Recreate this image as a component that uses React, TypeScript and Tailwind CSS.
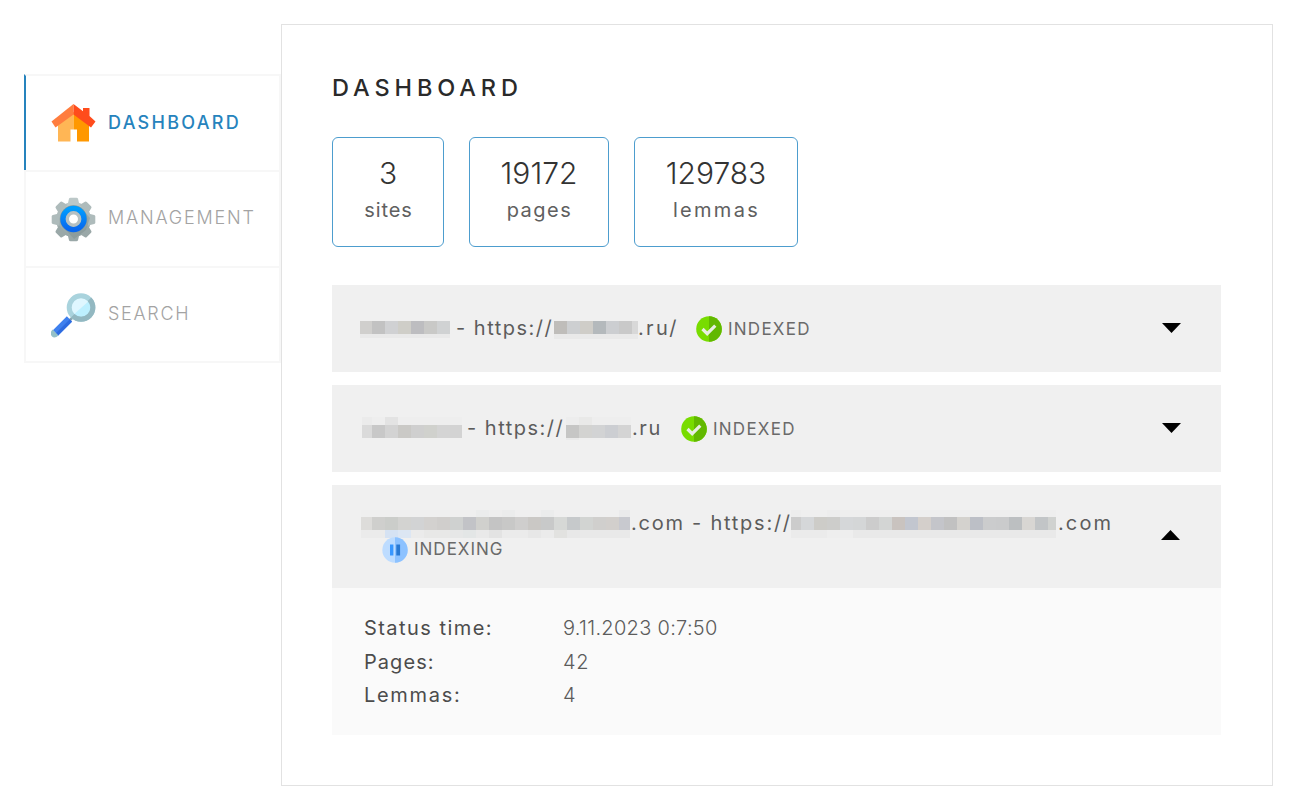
import React from "react";

type Strip = { w: number[]; c: string[]; top?: string[]; bottom?: string[]; topH?: number; bottomH?: number };

function Mosaic({ w, c, top, bottom, topH = 8, bottomH = 5 }: Strip) {
  const total = w.reduce((a, b) => a + b, 0);
  let x = 0;
  return (
    <svg width={total} height={29} viewBox={`0 0 ${total} 29`} shapeRendering="crispEdges" className="block shrink-0">
      {w.map((cw, i) => {
        const left = x;
        x += cw;
        return (
          <g key={i}>
            {top && <rect x={left} y={8 - topH} width={cw} height={topH} fill={top[i] ?? "#eeeeee"} />}
            <rect x={left} y={8} width={cw} height={13} fill={c[i]} />
            {bottom && <rect x={left} y={21} width={cw} height={bottomH} fill={bottom[i] ?? "#e9e9e9"} />}
          </g>
        );
      })}
    </svg>
  );
}

const fill = (n: number) => Array.from({ length: n }, () => 13);

const HouseIcon = () => (
  <svg width="45" height="38" viewBox="0 0 45 38">
    <path d="M7 19 22.5 8V37.5H7z" fill="#ffb655" />
    <path d="M22.5 8 38 19V37.5H22.5z" fill="#ff9800" />
    <path d="M19.5 25.5h6.5V38h-6.5z" fill="#fff" />
    <path d="M22.5 0v10.5L4.5 23.5.5 17.5z" fill="#ff7d3e" />
    <path d="M22.5 0 32 7.2V4h6.5v8l6 5.5-4.5 6L22.5 10.5z" fill="#ff4c1c" />
  </svg>
);

const GearIcon = () => (
  <svg width="45" height="45" viewBox="0 0 45 45">
    <defs>
      <linearGradient id="gearBody" x1="0" y1="0" x2="0" y2="1">
        <stop offset="0" stopColor="#bdc9c9" />
        <stop offset="1" stopColor="#96a5a5" />
      </linearGradient>
      <linearGradient id="gearRing" x1="0" y1="0" x2="0" y2="1">
        <stop offset="0" stopColor="#009dff" />
        <stop offset="1" stopColor="#0867ee" />
      </linearGradient>
    </defs>
    <circle cx="22.5" cy="22.5" r="17.5" fill="url(#gearBody)" />
    {[0, 45, 90, 135, 180, 225, 270, 315].map((a) => (
      <path
        key={a}
        d="M16.5 8 18 1.8Q18.3.7 19.5.7h6q1.2 0 1.5 1.1L28.5 8z"
        fill={a > 90 && a < 270 ? "#9aa8a8" : a === 0 ? "#bcc8c8" : "#aebbbb"}
        transform={`rotate(${a} 22.5 22.5)`}
      />
    ))}
    <path d="M31 12 39 21 35 33 23 42 14 32z" fill="#708080" opacity=".3" />
    <circle cx="22.5" cy="22" r="13.7" fill="#879b9c" />
    <circle cx="22.5" cy="22" r="10.3" fill="none" stroke="url(#gearRing)" strokeWidth="5.8" />
    <circle cx="22.5" cy="22" r="6.2" fill="#fff" stroke="#b5c0c2" strokeWidth="3.4" />
  </svg>
);

const SearchIcon = () => (
  <svg width="45" height="45" viewBox="0 0 45 45">
    <path d="M18 28 22 24" stroke="#8ca7b0" strokeWidth="2.5" />
    <path d="M4.5 40 18.5 26" stroke="#3f80ee" strokeWidth="7.5" />
    <path d="M7 42.5 21 28.5 18.8 26.3 4.8 40.3z" fill="#2862d9" opacity=".7" />
    <path d="M1.500 36.500 7.500 42.500Q3.500 46 .8 43.200T1.500 36.500z" fill="#94c0c8" />
    <circle cx="30" cy="14.5" r="12" fill="#dff7ff" />
    <path d="M20.5 23.5 39.5 6.5A12 12 0 0 1 20.5 23.5z" fill="#bdf0ff" />
    <circle cx="30" cy="14.5" r="11.8" fill="none" stroke="#a9d3dd" strokeWidth="5" />
    <path d="M38.5 6.2A11.8 11.8 0 0 1 21.7 22.8" fill="none" stroke="#93b8c1" strokeWidth="5" />
  </svg>
);

const CheckIcon = () => (
  <svg width="26" height="26" viewBox="0 0 26 26" className="block shrink-0">
    <circle cx="13" cy="13" r="12.8" fill="#78dc00" />
    <path d="M13 .2a12.8 12.8 0 0 1 0 25.6z" fill="#62b800" />
    <path d="m6.5 13 4.7 4.7L19.3 9.7" fill="none" stroke="#e8eee2" strokeWidth="3.2" />
  </svg>
);

const PauseIcon = () => (
  <svg width="26" height="26" viewBox="0 0 26 26" className="block shrink-0">
    <circle cx="13" cy="13" r="12.7" fill="#bddcff" />
    <path d="M13 .3a12.7 12.7 0 0 1 0 25.4z" fill="#8dc2ff" />
    <path d="M8 7.5h3.4v11H8z" fill="#3897ff" />
    <path d="M14.3 7.5h3.8v11h-3.8z" fill="#2878d2" />
  </svg>
);

const Arrow = ({ up = false }: { up?: boolean }) => (
  <svg width="19" height="10" viewBox="0 0 19 10" className="block shrink-0">
    <path d={up ? "M0 10 9.5 0 19 10z" : "M0 0h19L9.5 10z"} fill="#000" />
  </svg>
);

function NavItem({ active, icon, children }: { active?: boolean; icon: React.ReactNode; children: React.ReactNode }) {
  return (
    <div
      className={
        active
          ? "flex h-24 items-center border-t-2 border-r-2 border-l-2 border-t-[#f7f7f7] border-r-[#f7f7f7] border-l-[#2683bd] pl-[25px] text-[#2683bd]"
          : "flex h-24 items-center border-t-2 border-r-2 border-l-2 border-[#f7f7f7] pl-[25px] text-[#a3a3a3]"
      }
    >
      <div className="mr-3 flex w-[45px] justify-center">{icon}</div>
      <div className={active ? "pb-px" : "pb-[3px]"}>{children}</div>
    </div>
  );
}

function Stat({ className, value, label }: { className: string; value: React.ReactNode; label: React.ReactNode }) {
  return (
    <div className={`flex h-[110px] flex-col items-center rounded-[6px] border border-[#4d9dce] pt-[17px] ${className}`}>
      <div className="text-[30px] leading-9 font-light text-[#333]">{value}</div>
      <div className="mt-px pl-px text-[20px] leading-9 text-[#606060]">{label}</div>
    </div>
  );
}

const Indexed = () => (
  <>
    <CheckIcon />
    <span className="ml-1.5 text-[17px] leading-6 font-normal tracking-[1.25px] text-[#6a6a6a]">INDEXED</span>
  </>
);

export default function App() {
  return (
    <div className="flex h-[811px] w-[1293px] overflow-hidden bg-white pt-6 pl-6 font-['Inter',sans-serif] whitespace-nowrap">
      <nav className="mt-[50px] h-[289px] w-[257px] shrink-0 border-b-2 border-[#f7f7f7]">
        <NavItem active icon={<HouseIcon />}>
          <span className="text-[18px] font-medium tracking-[2.3px]">DASHBOARD</span>
        </NavItem>
        <NavItem icon={<GearIcon />}>
          <span className="text-[18px] font-light tracking-[1.8px]">MANAGEMENT</span>
        </NavItem>
        <NavItem icon={<SearchIcon />}>
          <span className="text-[18px] font-light tracking-[1.7px]">SEARCH</span>
        </NavItem>
      </nav>

      <main className="h-[762px] w-[992px] border border-[#e2e2e2] pt-[45px] pl-[50px]">
        <h1 className="text-[23.5px] leading-9 font-medium tracking-[4.9px] text-[#2a2a2a]">DASHBOARD</h1>

        <section className="mt-[31px] flex gap-[25px]">
          <Stat className="w-[112px]" value="3" label={<span className="tracking-[0.9px]">sites</span>} />
          <Stat className="w-[140px]" value="19172" label={<span className="tracking-[1.5px]">pages</span>} />
          <Stat className="w-[164px]" value="129783" label={<span className="tracking-[2.3px]">lemmas</span>} />
        </section>

        <section className="mt-[38px] flex w-[889px] flex-col gap-[13px] text-[20px] leading-[29px] text-[#5c5c5c]">
          <div className="flex h-[87px] items-center bg-[#f0f0f0] pl-7">
            <div className="pb-0.5">
              <Mosaic w={[12, 13, 13, 13, 13, 13, 13]} c={["#d0cfcd", "#c2c2c2", "#d0d1d3", "#cfcec8", "#bdbdc0", "#c9c9c7", "#d0d2d3"]} bottom={[]} bottomH={4} />
            </div>
            <span className="w-[104px] pb-px pl-1.5 tracking-[1.5px]">- https://</span>
            <div className="pb-0.5">
              <Mosaic w={[13, 13, 13, 13, 13, 13, 6]} c={["#bfbdba", "#cdcfd1", "#cfcdc8", "#b4b9bc", "#ccced1", "#c9c9c9", "#d8d8d8"]} bottom={[]} bottomH={5} />
            </div>
            <span className="w-[58px] pb-px tracking-[2.3px]">.ru/</span>
            <Indexed />
            <div className="mr-10 ml-auto pb-px"><Arrow /></div>
          </div>

          <div className="flex h-[87px] items-center bg-[#f0f0f0] pl-[30px]">
            <div className="mt-[5px]">
              <Mosaic
                w={[10, 13, 13, 13, 13, 13, 13, 12]}
                c={["#dadada", "#c8c8c8", "#d3d3d3", "#cac9c6", "#cfcfcf", "#d0d1cd", "#d4d4d4", "#d3d3d3"]}
                top={["#ebebeb", "#eeeeee", "#e3e3e3"]}
              />
            </div>
            <span className="w-[104px] pb-px pl-[5px] tracking-[1.5px]">- https://</span>
            <div className="mt-[5px]">
              <Mosaic w={[13, 13, 13, 13, 13]} c={["#c6c6c5", "#d3d3d1", "#d2d3d4", "#ccced2", "#d4d4d4"]} top={["#ededed", "#e9e9e8"]} bottom={["#eaeaea", "#efefef", "#efefef", "#efefef", "#efefef"]} bottomH={2} />
            </div>
            <span className="w-[50px] pb-px pl-px tracking-[1.6px]">.ru</span>
            <Indexed />
            <div className="mr-10 ml-auto pb-px"><Arrow /></div>
          </div>

          <div>
            <div className="flex h-[103px] items-center bg-[#f0f0f0] pb-[3px] pl-[29px]">
              <div>
                <div className="flex h-[29px] items-center">
                  <Mosaic
                    w={[11, ...fill(19), 11]}
                    c={["#dddcda", "#cfcfcd", "#cbcdca", "#d3d3d1", "#d2d3d4", "#d3d1cf", "#d0cecc", "#cfd1d0", "#c2c3c7", "#d0d0cd", "#c4c4c4", "#c8c8c7", "#cfcecd", "#cac8c5", "#c8c9c9", "#d6d8d6", "#c6c9cb", "#d2d4d2", "#d0cfcd", "#d2cfcc", "#c8c9cf"]}
                    top={["#efefef", "#efefef", "#efefef", "#efefef", "#efefef", "#efefef", "#efefef", "#efefef", "#efefef", "#ebecec", "#eeeeee", "#ebecec", "#efefef", "#efefef", "#ebecec", "#efefef", "#efefef", "#efefef", "#efefef", "#efefef", "#eaeaeb"]}
                    topH={7}
                    bottom={["#ebebeb", "#ebebeb", "#d5e2f3", "#dce6f3", "#ebebeb", "#e8e8e7", "#e8e8e7", "#e6e7e7", "#e3e6e6", "#e9e9e9", "#e3e3e3", "#ebebeb", "#ebebeb", "#e7e7e7", "#ebebeb", "#e2e2e0", "#e8e8e8"]}
                    bottomH={8}
                  />
                  <span className="w-[161px] pl-px tracking-[1.75px]">.com - https://</span>
                  <Mosaic
                    w={[10, ...fill(19), 8]}
                    c={["#cccccc", "#d5d7d9", "#cdccc8", "#cdcdcb", "#d5d7d9", "#d4d6d7", "#cccccc", "#d3d5d4", "#c9c3bf", "#c2c6cf", "#d4cfcb", "#c4c5ca", "#c1c1c1", "#d4d2ce", "#bcbfc6", "#cbcccd", "#cacbcc", "#bcbfc1", "#d8d6d3", "#c2c5c7", "#d0d2d0"]}
                    top={["#ededed", "#efefef", "#efefef", "#ededed"]}
                    topH={7}
                    bottom={["#ebebeb", "#ebebeb", "#ebebeb", "#eeeeee", "#eeeeee", "#e9e9e9"]}
                    bottomH={9}
                  />
                  <span className="pl-0.5 tracking-[2.1px]">.com</span>
                </div>
                <div className="flex h-6 items-center pl-[21px]">
                  <PauseIcon />
                  <span className="ml-1.5 pb-0.5 text-[17px] leading-6 tracking-[1px] text-[#6a6a6a]">INDEXING</span>
                </div>
              </div>
              <div className="mr-[41px] ml-auto"><Arrow up /></div>
            </div>
            <dl className="grid h-[147px] grid-cols-[199px_1fr] content-start bg-[#fafafa] pt-6 pl-8 leading-[33.5px]">
              <dt className="tracking-[1.45px] text-[#4c4c4c]">Status time:</dt>
              <dd className="font-light tracking-[0.3px]">9.11.2023 0:7:50</dd>
              <dt className="tracking-[1.05px] text-[#4c4c4c]">Pages:</dt>
              <dd className="font-light tracking-[0.7px]">42</dd>
              <dt className="tracking-[1.7px] text-[#4c4c4c]">Lemmas:</dt>
              <dd className="font-light">4</dd>
            </dl>
          </div>
        </section>
      </main>
    </div>
  );
}
